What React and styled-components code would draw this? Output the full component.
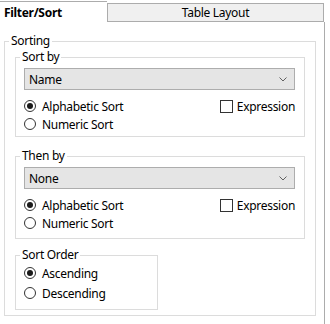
import React from 'react';
import styled, { createGlobalStyle } from 'styled-components';

const GlobalStyle = createGlobalStyle`
    body {
        margin: 0;
        background: #fff;
        font-family: "Noto Sans", "Segoe UI", sans-serif;
        font-size: 12px;
        letter-spacing: -0.3px;
        color: #000;
    }
`;

const Page = styled.div`
    width: 330px;
    height: 324px;
    overflow: hidden;
`;

const TabStrip = styled.div`
    display: flex;
    align-items: flex-end;
    height: 22px;
`;

const Tab = styled.div`
    box-sizing: border-box;
    display: flex;
    align-items: center;
    width: ${p => (p.$active ? '107px' : '217px')};
    height: ${p => (p.$active ? '21px' : '19px')};
    padding-left: ${p => (p.$active ? '4px' : '0')};
    justify-content: ${p => (p.$active ? 'flex-start' : 'center')};
    border: 1px solid #acacac;
    border-left: ${p => (p.$active ? 'none' : '1px solid #acacac')};
    border-bottom: ${p => (p.$active ? 'none' : '1px solid #acacac')};
    border-right: none;
    background: ${p => (p.$active ? '#fff' : '#f0f0f0')};
    font-weight: ${p => (p.$active ? 700 : 400)};

    &:last-child {
        border-right: 1px solid #acacac;
    }
`;

const Panel = styled.div`
    box-sizing: border-box;
    width: 325px;
    height: 310px;
    padding: 11px 0 0 4px;
    border-right: 1px solid #acacac;
`;

const Group = styled.fieldset`
    box-sizing: border-box;
    width: ${p => p.$width}px;
    margin: ${p => p.$top || 0}px 0 0 0;
    padding: 0;
    min-width: 0;
    border: 1px solid #dcdcdc;
`;

const Legend = styled.legend`
    margin-left: 4px;
    padding: 0 2px;
    line-height: 16px;
`;

const GroupBody = styled.div`
    padding: ${p => p.$pad};
`;

const Select = styled.div`
    box-sizing: border-box;
    display: flex;
    align-items: center;
    justify-content: space-between;
    height: 22px;
    padding: 0 7px 0 4px;
    border: 1px solid #adadad;
    background: #e5e5e5;
`;

const Options = styled.div`
    display: flex;
    justify-content: space-between;
    align-items: flex-start;
    margin-top: 7px;
`;

const Column = styled.div`
    display: flex;
    flex-direction: column;
`;

const Row = styled.label`
    display: flex;
    align-items: center;
    height: ${p => p.$h || 18}px;
    white-space: nowrap;
`;

const RadioMark = styled.span`
    box-sizing: border-box;
    display: flex;
    align-items: center;
    justify-content: center;
    width: 12px;
    height: 12px;
    margin-right: 6px;
    border: 1px solid #333;
    border-radius: 50%;
    background: #fff;

    &::after {
        content: '';
        display: ${p => (p.$checked ? 'block' : 'none')};
        width: 6px;
        height: 6px;
        border-radius: 50%;
        background: #1a1a1a;
    }
`;

const CheckMark = styled.span`
    box-sizing: border-box;
    width: 13px;
    height: 13px;
    margin-right: 4px;
    border: 1px solid #333;
    background: #fff;
`;

const Chevron = () => (
    <svg width="8" height="5" viewBox="0 0 8 5">
        <polyline points="0.5,0.5 4,4 7.5,0.5" fill="none" stroke="#606060" strokeWidth="1" />
    </svg>
);

const Radio = ({ checked, h, children }) => (
    <Row $h={h}>
        <RadioMark $checked={checked} />
        {children}
    </Row>
);

const SortGroup = ({ title, value, top, pad }) => (
    <Group $width={290} $top={top}>
        <Legend>{title}</Legend>
        <GroupBody $pad={pad}>
            <Select>
                <span>{value}</span>
                <Chevron />
            </Select>
            <Options>
                <Column>
                    <Radio checked>Alphabetic Sort</Radio>
                    <Radio>Numeric Sort</Radio>
                </Column>
                <Row>
                    <CheckMark />
                    Expression
                </Row>
            </Options>
        </GroupBody>
    </Group>
);

const App = () => {
    return (
        <Page>
            <GlobalStyle />
            <TabStrip>
                <Tab $active>Filter/Sort</Tab>
                <Tab>Table Layout</Tab>
            </TabStrip>
            <Panel>
                <Group $width={312}>
                    <Legend>Sorting</Legend>
                    <GroupBody $pad="0 10px 5px 10px">
                        <SortGroup title="Sort by" value="Name" pad="3px 9px 3px 8px" />
                        <SortGroup title="Then by" value="None" top={11} pad="3px 9px 6px 8px" />
                        <Group $width={143} $top={8}>
                            <Legend>Sort Order</Legend>
                            <GroupBody $pad="0 8px 6px 8px">
                                <Radio checked h={20}>Ascending</Radio>
                                <Radio h={20}>Descending</Radio>
                            </GroupBody>
                        </Group>
                    </GroupBody>
                </Group>
            </Panel>
        </Page>
    );
};

export default App;
